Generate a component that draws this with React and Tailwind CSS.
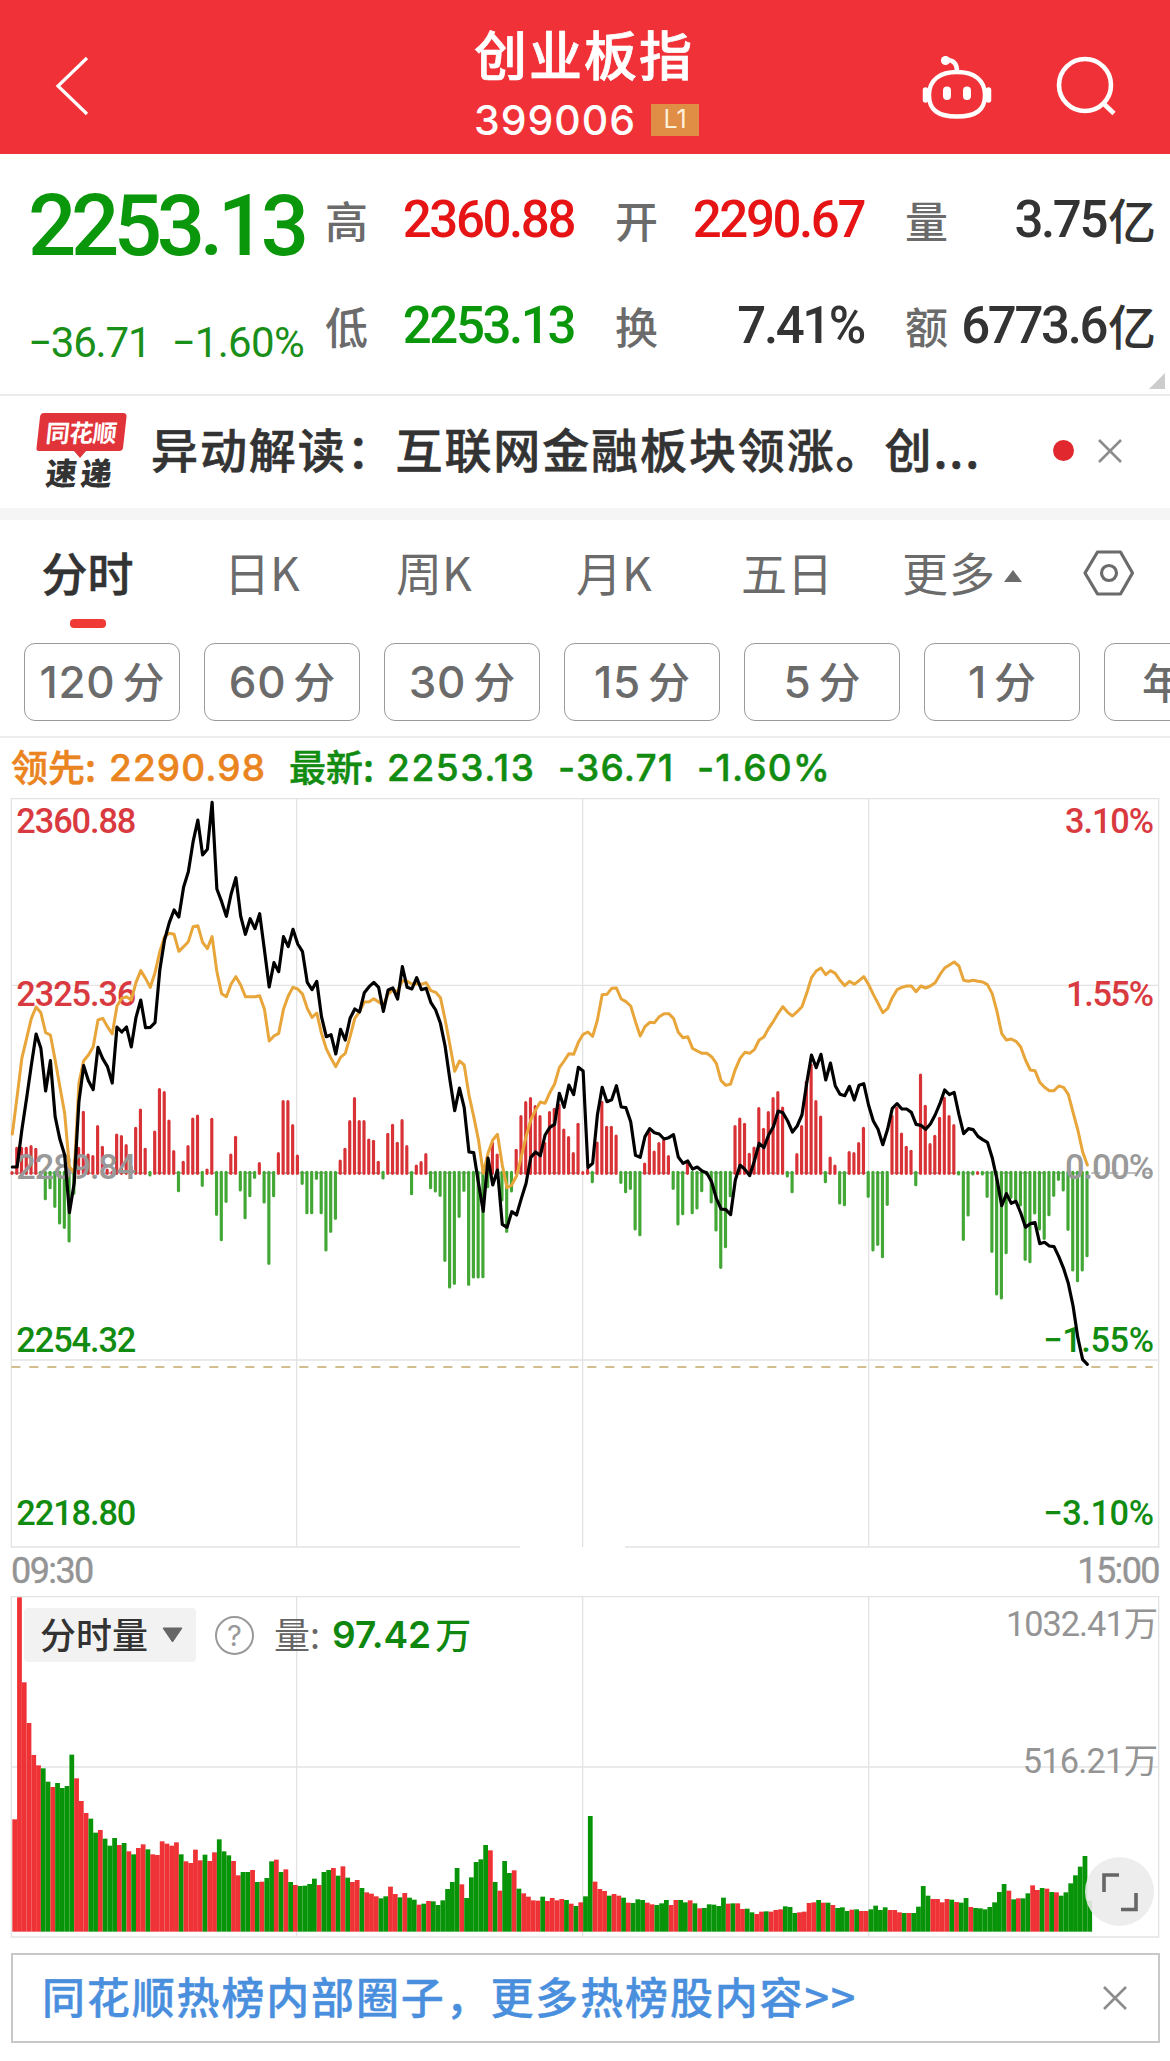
import { useState } from "react";

// one value per minute, in chart units (3 units = 1px)
const price = [
  1131, 1131, 1020, 925, 825, 732, 775, 903, 812, 980, 1048, 1095, 1268, 1180, 935, 827, 872, 899, 772, 806,
  830, 879, 711, 726, 711, 771, 682, 630, 713, 712, 698, 540, 450, 398, 360, 381, 292, 245, 155, 90,
  195, 178, 37, 297, 335, 379, 312, 263, 378, 433, 386, 416, 371, 480, 591, 518, 545, 440, 470, 418,
  462, 485, 577, 599, 574, 680, 740, 734, 792, 718, 750, 685, 657, 666, 608, 590, 577, 592, 664, 600,
  594, 627, 530, 592, 597, 563, 599, 595, 638, 660, 700, 770, 870, 962, 894, 953, 1086, 1088, 1180, 1264,
  1104, 1185, 1140, 1303, 1312, 1265, 1275, 1226, 1180, 1102, 1086, 1097, 1035, 1012, 1003, 910, 952, 885, 914, 832,
  843, 1133, 1120, 975, 892, 935, 929, 887, 951, 953, 995, 1096, 1102, 1040, 1016, 1028, 1032, 1047, 1043, 1034,
  1101, 1120, 1113, 1137, 1131, 1143, 1149, 1175, 1225, 1257, 1259, 1274, 1170, 1126, 1138, 1157, 1113, 1060, 1073, 1035,
  1010, 963, 968, 993, 1026, 1008, 975, 880, 795, 833, 793, 870, 819, 887, 913, 917, 889, 930, 886, 881,
  945, 993, 1018, 1064, 1018, 955, 941, 957, 957, 967, 1003, 1006, 1018, 1002, 975, 941, 900, 914, 907, 973,
  1031, 1016, 1019, 1039, 1049, 1057, 1103, 1168, 1247, 1211, 1240, 1234, 1269, 1312, 1301, 1298, 1361, 1357, 1368, 1370,
  1400, 1435, 1480, 1548, 1643, 1708, 1723,
];

const lead = [
  1032, 920, 805, 745, 685, 651, 668, 728, 735, 810, 890, 970, 1130, 1148, 880, 812, 795, 770, 690, 685,
  710, 732, 648, 625, 620, 630, 577, 542, 565, 592, 548, 485, 440, 430, 433, 484, 470, 455, 410, 407,
  457, 476, 440, 545, 611, 620, 582, 560, 585, 620, 620, 620, 617, 658, 753, 738, 730, 658, 618, 592,
  597, 612, 655, 682, 669, 730, 776, 805, 830, 802, 790, 740, 685, 665, 636, 635, 626, 636, 645, 612,
  600, 605, 572, 574, 582, 581, 583, 578, 602, 607, 623, 690, 765, 844, 813, 825, 915, 980, 1050, 1150,
  1090, 1050, 1033, 1125, 1193, 1185, 1158, 1100, 1040, 990, 960, 936, 940, 908, 882, 833, 813, 791, 793, 757,
  733, 726, 739, 690, 614, 613, 595, 594, 627, 635, 648, 695, 738, 710, 697, 698, 680, 671, 671, 685,
  727, 743, 740, 775, 783, 790, 790, 800, 820, 872, 886, 882, 838, 805, 787, 790, 779, 750, 741, 715,
  694, 670, 650, 667, 678, 665, 650, 610, 563, 543, 534, 554, 542, 550, 571, 587, 574, 583, 572, 560,
  583, 613, 640, 668, 656, 623, 599, 592, 588, 588, 605, 588, 594, 588, 578, 554, 534, 525, 516, 528,
  571, 574, 571, 574, 576, 584, 611, 664, 731, 750, 747, 754, 771, 810, 840, 842, 877, 892, 902, 902,
  888, 892, 913, 967, 1020, 1085, 1125,
];

// tips of the red / green momentum bars around the zero line
const momentum = [
  1148, 1075, 1075, 1075, 1070, 1078, 1152, 1226, 1193, 1249, 1299, 1312, 1353, 1210, 1075, 967, 1095, 1100, 1010, 1072,
  1140, 1148, 1035, 1040, 1067, 1130, 1015, 960, 1078, 1155, 1026, 899, 908, 993, 1085, 1202, 1117, 1070, 987, 978,
  1186, 1140, 988, 1273, 1349, 1234, 1095, 1042, 1200, 1283, 1217, 1162, 1121, 1236, 1420, 1217, 1091, 935, 935, 1007,
  1098, 1180, 1268, 1268, 1165, 1268, 1380, 1324, 1285, 1113, 1078, 995, 926, 995, 995, 1050, 1054, 1117, 1164, 1033,
  1006, 1060, 992, 1070, 1211, 1128, 1118, 1094, 1193, 1203, 1216, 1411, 1491, 1480, 1279, 1201, 1483, 1461, 1461, 1460,
  1190, 1060, 1095, 1230, 1324, 1203, 1081, 980, 938, 926, 950, 980, 1060, 968, 958, 945, 1020, 1043, 1091, 1003,
  1148, 1140, 1175, 1059, 937, 1012, 1012, 1038, 1177, 1205, 1195, 1317, 1334, 1122, 1030, 1086, 1061, 1053, 1100, 1195,
  1302, 1271, 1118, 1268, 1254, 1202, 1152, 1236, 1320, 1432, 1370, 1217, 1010, 987, 1003, 1093, 1074, 956, 1018, 968,
  926, 908, 954, 1158, 1205, 1094, 1010, 877, 825, 935, 981, 1175, 1104, 1128, 1239, 1244, 1088, 1091, 1061, 1015,
  1219, 1380, 1363, 1400, 1243, 979, 955, 1032, 1072, 1084, 1184, 855, 949, 1064, 1039, 985, 925, 980, 1007, 1152,
  1348, 1275, 1152, 1148, 1152, 1219, 1384, 1512, 1524, 1388, 1222, 1228, 1245, 1408, 1415, 1269, 1317, 1345, 1274, 1216,
  1168, 1200, 1318, 1440, 1472, 1440, 1397,
];

// volume bar tops, negative = falling minute (green)
const volume = [
  838, 172, 427, 549, 645, 676, -685, -725, 741, -729, -744, -738, -644, 715, 783, 819, -836, -878, 870, -896,
  -917, -894, 915, -909, 934, -943, 924, 913, -928, 943, 945, 904, 911, 917, 907, -943, 964, 969, 929, 961,
  -944, 963, 937, -898, -934, -946, 963, 1006, -996, -996, 990, -1026, 1025, -1014, -964, 959, -996, 988, -1026, 1035,
  -1038, -1037, -1032, -1016, 1035, -996, -990, 984, -1007, 979, -1013, 1026, 1020, -1044, 1057, 1061, 1069, -1075, -1069, 1040,
  1062, -1072, 1059, -1073, -1079, 1094, -1091, 1083, -1084, -1095, -1081, -1047, -1026, -984, 1033, -1074, -1012, -966, -958, -915,
  931, -1026, 1052, -963, -999, 991, -1046, 1060, 1070, 1081, 1082, -1070, 1083, 1074, 1081, 1077, -1080, 1091, -1098, 1087,
  -1069, -828, 1025, 1047, 1053, -1067, 1062, 1067, -1073, 1088, -1089, -1078, -1080, 1088, 1093, -1095, -1090, -1080, 1095, 1080,
  -1080, -1087, 1081, -1090, 1105, -1104, -1093, -1094, -1098, -1073, 1091, -1090, 1090, 1107, -1106, -1117, 1122, 1115, -1114, 1115,
  1110, 1108, -1099, -1101, -1119, 1117, 1115, 1089, 1087, -1080, 1088, -1088, 1095, -1104, -1102, -1113, 1109, -1108, 1113, 1113,
  -1108, -1097, -1110, -1102, 1110, 1110, 1117, -1119, 1119, -1119, -1100, -1038, -1067, 1077, 1077, 1087, 1077, -1079, 1086, -1088,
  -1074, 1101, -1104, -1105, -1108, -1101, -1087, -1056, -1032, 1052, -1078, 1075, -1075, -1060, 1036, 1050, -1044, 1046, -1056, 1057,
  -1067, -1057, -1030, -1006, -980, -948, -1082,
];

const STEP = 14.27;
const ZERO = 1149;
const VOL_BASE = 1175;

const toPoints = (data) =>
  data.map((y, i) => `${(37 + i * STEP).toFixed(1)},${y}`).join(" ");

const periods = [
  { label: "日K", width: "w-[172px]" },
  { label: "周K", width: "w-[180px]" },
  { label: "月K", width: "w-[165px]" },
  { label: "五日", width: "w-[160px]" },
];
const minutes = ["120", "60", "30", "15", "5", "1"];

const axis = [
  { y: 128, left: "2360.88", right: "3.10%", w: 267, color: "fill-[#d93a3f]" },
  { y: 647, left: "2325.36", right: "1.55%", w: 264, color: "fill-[#d93a3f]" },
  { y: 1166, left: "2289.84", right: "0.00%", w: 267, color: "fill-[#999999]" },
  { y: 1686, left: "2254.32", right: "−1.55%", w: 332, color: "fill-[#118c11]" },
  { y: 2205, left: "2218.80", right: "−3.10%", w: 332, color: "fill-[#118c11]" },
];

function Header() {
  return (
    <header className="flex h-[154px] items-center bg-[#f03238] text-white">
      <div className="w-[440px] pl-[54px] pt-[18px]">
        <svg className="h-[60px] w-9" viewBox="0 0 36 60" fill="none" stroke="currentColor" strokeWidth="3.2">
          <path d="M33 2 L4 30 L33 58" />
        </svg>
      </div>
      <div className="flex w-[290px] flex-col pt-[7px] pl-[34px]">
        <h1 className="text-[53px] leading-[66px] font-medium tracking-[2px] [-webkit-text-stroke:0.7px]">创业板指</h1>
        <div className="mt-[13px] flex h-[42px] items-center">
          <span className="font-['Inter'] text-[41px] leading-[42px] font-medium tracking-[1px]">399006</span>
          <span className="ml-[15px] flex h-8 w-12 items-center justify-center bg-[#e08e45] font-['Inter'] text-[25px] text-[#fff0d8]">
            L1
          </span>
        </div>
      </div>
      <div className="flex flex-1 items-start pl-[190px] pt-[22px]">
        <svg className="h-16 w-[72px]" viewBox="0 0 72 64" fill="none" stroke="currentColor" strokeWidth="4.4">
          <path d="M37 15 C37 8 34 4 27 4" strokeLinecap="round" />
          <circle cx="25.5" cy="4.5" r="4.6" fill="currentColor" stroke="none" />
          <path d="M37 16 C54 16 65 24 65 39 C65 54 56 60.5 37 60.5 C18 60.5 9 54 9 39 C9 24 20 16 37 16 Z" />
          <path d="M5.5 34 V44 M68.5 34 V44" strokeWidth="5.5" strokeLinecap="round" />
          <path d="M27 34.500 V40 M47 34.500 V40" strokeWidth="8" strokeLinecap="round" />
        </svg>
        <svg className="-mt-[3px] ml-[64px] h-16 w-16" viewBox="0 0 64 64" fill="none" stroke="currentColor" strokeWidth="4.6">
          <circle cx="29" cy="32" r="26" />
          <path d="M47 50 L58 60.500" />
        </svg>
      </div>
    </header>
  );
}

function Stat({ label, value, unit, color, width }) {
  return (
    <div className={`flex items-center justify-between ${width}`}>
      <span className="-mt-[3px] text-[43px] leading-[50px] font-medium text-[#6b6b6b]">{label}</span>
      <span className={`flex items-center font-['Roboto'] text-[51px] leading-[50px] font-medium tracking-[-2.4px] whitespace-nowrap ${color}`}>
        {value}
        {unit && <span className="-mt-[5px] pl-[2px] font-['Noto_Sans_CJK_SC'] text-[48px] font-medium tracking-normal">{unit}</span>}
      </span>
    </div>
  );
}

function Quote() {
  return (
    <section className="relative flex h-[242px] border-b-2 border-[#ebebeb] text-[#333333]">
      <div className="w-[325px] pl-7 text-[#0b970b]">
        <div className="mt-[30px] font-['Roboto'] text-[85px] leading-[84px] font-medium tracking-[-5.4px]">2253.13</div>
        <div className="mt-[53px] flex justify-between pr-[21px] font-['Roboto'] text-[42px] leading-[44px] text-[#1a8f1a]">
          <span className="tracking-[-1.2px]">−36.71</span>
          <span className="tracking-[-0.7px]">−1.60%</span>
        </div>
      </div>
      <div className="flex flex-1 flex-col gap-[56px] pt-[41px]">
        <div className="flex gap-[41px]">
          <Stat label="高" value="2360.88" color="text-[#e61414]" width="w-[249px]" />
          <Stat label="开" value="2290.67" color="text-[#e61414]" width="w-[249px]" />
          <Stat label="量" value="3.75" unit="亿" color="text-[#333333]" width="w-[251px]" />
        </div>
        <div className="flex gap-[41px]">
          <Stat label="低" value="2253.13" color="text-[#0b970b]" width="w-[249px]" />
          <Stat label="换" value="7.41%" color="text-[#333333]" width="w-[249px]" />
          <Stat label="额" value="6773.6" unit="亿" color="text-[#333333]" width="w-[251px]" />
        </div>
      </div>
      <svg className="absolute right-[5px] bottom-[5px] h-4 w-4 text-[#cccccc]" viewBox="0 0 16 16">
        <path d="M16 0 V16 H0 Z" fill="currentColor" />
      </svg>
    </section>
  );
}

function News({ onClose }) {
  return (
    <section className="flex h-28 items-center pb-[3px] pl-9 text-[#333333]">
      <div className="relative h-[78px] w-[91px]">
        <svg className="absolute inset-0 h-full w-full" viewBox="0 0 91 78">
          <path d="M8 1 H87 Q91 1 90.500 5 L87 36 Q86.500 39 83 39 H50 L44 46 L38 39 H3 Q0 39 0.500 36 L4 5 Q4.500 1 8 1 Z" fill="#e0343a" />
        </svg>
        <div className="relative -skew-x-6 pt-[5px] text-center text-[24px] leading-[29px] font-bold tracking-[-0.5px] text-white">同花顺</div>
        <div className="relative mt-[10px] -skew-x-6 pl-[10px] text-[31px] leading-[32px] font-black tracking-[4px] whitespace-nowrap">速递</div>
      </div>
      <p className="-mt-[5px] ml-[24px] w-[865px] text-[47px] leading-[60px] font-medium tracking-[1.9px] whitespace-nowrap [-webkit-text-stroke:0.6px]">
        异动解读：互联网金融板块领涨。创...
      </p>
      <span className="ml-[37px] h-[21px] w-[21px] rounded-full bg-[#e0282e]" />
      <button onClick={onClose} className="ml-[24px]">
        <svg className="h-6 w-6 text-[#8c8c8c]" viewBox="0 0 24 24" stroke="currentColor" strokeWidth="2.6">
          <path d="M1 1 L23 23 M23 1 L1 23" />
        </svg>
      </button>
    </section>
  );
}

function Tabs() {
  return (
    <section className="border-b-2 border-[#ededed]">
      <nav className="flex h-[123px] items-start pt-[18px] text-[46px] leading-[66px] text-[#6b6b6b]">
        <div className="flex w-[186px] flex-col items-center pr-[11px] font-medium text-[#333333] [-webkit-text-stroke:0.5px]">
          <span>分时</span>
          <span className="mt-[15px] h-[9px] w-9 rounded-[4px] bg-[#f03a36]" />
        </div>
        <div className="flex w-[716px] pl-[38px]">
          {periods.map((p) => (
            <span key={p.label} className={p.width}>
              {p.label}
            </span>
          ))}
        </div>
        <span className="tracking-[1px]">更多</span>
        <svg className="mt-[32px] ml-[8px] h-3 w-[18px]" viewBox="0 0 18 12">
          <path d="M9 0 L18 12 H0 Z" fill="#6b6b6b" />
        </svg>
        <svg className="mt-[12px] ml-[61px] h-[46px] w-[52px]" viewBox="0 0 52 46" fill="none" stroke="#6b6b6b" strokeWidth="3.2">
          <path d="M14.500 2 H37.500 L49.500 23 L37.500 44 H14.500 L2 23 Z" strokeLinejoin="round" />
          <circle cx="26" cy="23" r="7.500" />
        </svg>
      </nav>
      <div className="flex h-[93px] gap-6 overflow-hidden pl-6 font-medium text-[#6b6b6b]">
        {minutes.map((m) => (
          <div key={m} className="flex h-[78px] w-[156px] shrink-0 items-center justify-center gap-[7px] rounded-[11px] border-[1.5px] border-[#999999]">
            <span className="font-['Inter'] text-[44px] leading-[50px] tracking-[0.8px]">{m}</span>
            <span className="-mt-[4px] text-[42px] leading-[50px]">分</span>
          </div>
        ))}
        <div className="flex h-[78px] w-[156px] shrink-0 items-center rounded-[11px] border-[1.5px] border-[#999999] pb-1 pl-[37px] text-[42px]">
          年
        </div>
      </div>
    </section>
  );
}

function PriceChart() {
  return (
    <svg className="block h-[765px] w-full" viewBox="0 0 3510 2295">
      <g stroke="#e3e3e3" strokeWidth="4" fill="none">
        <path d="M1560 2271 H34 V26 H3476 V2271 H1875" />
        <path d="M34 586 H3476 M34 1710 H3476" />
        <path d="M890 26 V2271 M1748 26 V2271 M2606 26 V2271" />
      </g>
      <path d="M34 1149 H3458" stroke="#a8a8a8" strokeWidth="4" strokeDasharray="27 27" />
      <path d="M34 1731 H3458" stroke="#d2bd8e" strokeWidth="5.5" strokeDasharray="27 27" />

      {momentum.map((y, i) => (
        <line
          key={i}
          x1={36 + i * STEP}
          x2={36 + i * STEP}
          y1={y < ZERO ? 1150 : 1147}
          y2={y}
          stroke={y < ZERO ? "#d83236" : "#43a736"}
          strokeWidth="9.5"
          strokeLinecap="round"
        />
      ))}

      <g className="font-['Roboto'] text-[103px] font-medium">
        {axis.map((row) => (
          <g key={row.y} className={row.color}>
            <text x="49" y={row.y} textLength="360">{row.left}</text>
            <text x={3462 - row.w} y={row.y} textLength={row.w}>{row.right}</text>
          </g>
        ))}
      </g>

      <polyline points={toPoints(lead)} fill="none" stroke="#e8a53a" strokeWidth="9" strokeLinejoin="round" strokeLinecap="round" />
      <polyline points={toPoints(price)} fill="none" stroke="#000000" strokeWidth="9.5" strokeLinejoin="round" strokeLinecap="round" />
    </svg>
  );
}

function VolumeChart() {
  return (
    <div className="relative">
      <svg className="block h-[355px] w-full" viewBox="0 150 3510 1065">
        <g stroke="#e3e3e3" strokeWidth="4" fill="none">
          <path d="M34 170 H3476 V1191 H34 Z" />
          <path d="M34 681 H3476" />
          <path d="M890 170 V1191 M1748 170 V1191 M2606 170 V1191" />
        </g>
        {volume.map((v, i) => (
          <rect
            key={i}
            x={37 + i * STEP}
            y={Math.abs(v)}
            width="14.3"
            height={VOL_BASE - Math.abs(v)}
            fill={v < 0 ? "#089408" : "#ee3236"}
          />
        ))}
        <g className="fill-[#949494] font-['Roboto','Noto_Sans_CJK_SC'] text-[103px]">
          <text x="3018" y="287" textLength="456">1032.41万</text>
          <text x="3068" y="700" textLength="406">516.21万</text>
        </g>
      </svg>

      <div className="absolute top-[18px] left-6 flex h-[54px] items-center leading-[50px]">
        <div className="flex h-[54px] w-[172px] items-center rounded bg-[#f2f2f2] pl-4 text-[36px] font-medium text-[#333333]">
          <span className="-mt-[4px]">分时量</span>
          <svg className="ml-[14px] h-4 w-[21px]" viewBox="0 0 21 16">
            <path d="M1 1 H20 L10.500 15 Z" fill="#666666" stroke="#666666" strokeLinejoin="round" />
          </svg>
        </div>
        <span className="ml-[19px] flex h-[39px] w-[39px] items-center justify-center rounded-full border-[2.5px] border-[#999999] font-['Inter'] text-[29px] leading-none text-[#999999]">
          ?
        </span>
        <span className="-mt-[4px] ml-[20px] text-[36px] text-[#666666]">量:</span>
        <span className="ml-[12px] font-['Inter'] text-[37px] font-semibold text-[#0f870f]">97.42</span>
        <span className="-mt-[5px] ml-[4px] text-[36px] font-medium text-[#0f870f]">万</span>
      </div>

      <button className="absolute top-[267px] left-[1085px] flex h-[69px] w-[69px] items-center justify-center rounded-full bg-[#ebebeb]/90">
        <svg className="h-10 w-9" viewBox="0 0 36 40" fill="none" stroke="#666666" strokeWidth="3.6">
          <path d="M2 20 V3 H17 M34 21 V37.500 H19" />
        </svg>
      </button>
    </div>
  );
}

export default function App() {
  const [showNews, setShowNews] = useState(true);
  const [showBanner, setShowBanner] = useState(true);

  return (
    <div className="h-[2061px] w-[1170px] overflow-hidden bg-white font-['Noto_Sans_CJK_SC',sans-serif]">
      <Header />
      <Quote />
      {showNews && <News onClose={() => setShowNews(false)} />}
      <div className="h-3 bg-[#f5f5f5]" />
      <Tabs />

      <div className="flex h-[52px] items-center pt-[7px] pl-[11px] text-[37px] leading-[44px] font-medium text-[#118c11] [-webkit-text-stroke:0.5px]">
        <div className="flex w-[278px] items-center text-[#ea8420]">
          <span className="-mt-[3px]">领先:</span>
          <span className="ml-[13px] font-['Inter'] tracking-[1.1px]">2290.98</span>
        </div>
        <span className="-mt-[3px]">最新:</span>
        <span className="ml-[13px] w-[171px] font-['Inter'] tracking-[1.6px]">2253.13</span>
        <span className="w-[139px] font-['Inter'] tracking-[1.2px]">-36.71</span>
        <span className="font-['Inter'] tracking-[1.2px]">-1.60%</span>
      </div>

      <PriceChart />

      <div className="flex h-[35px] justify-between px-[11px] font-['Roboto'] text-[36px] leading-[32px] tracking-[-1.6px] text-[#949494] [-webkit-text-stroke:0.4px]">
        <span>09:30</span>
        <span>15:00</span>
      </div>

      <VolumeChart />

      {showBanner && (
        <div className="mt-2 ml-[11px] flex h-[90px] w-[1149px] items-center justify-between border-2 border-[#c8c8c8] pr-[31px] pl-[29px]">
          <a className="-mt-[5px] text-[43px] font-medium tracking-[1.85px] text-[#4a8fdd] [-webkit-text-stroke:0.4px]">
            同花顺热榜内部圈子，更多热榜股内容&gt;&gt;
          </a>
          <button onClick={() => setShowBanner(false)}>
            <svg className="h-6 w-6 text-[#8c8c8c]" viewBox="0 0 24 24" stroke="currentColor" strokeWidth="2.6">
              <path d="M1 1 L23 23 M23 1 L1 23" />
            </svg>
          </button>
        </div>
      )}
    </div>
  );
}
